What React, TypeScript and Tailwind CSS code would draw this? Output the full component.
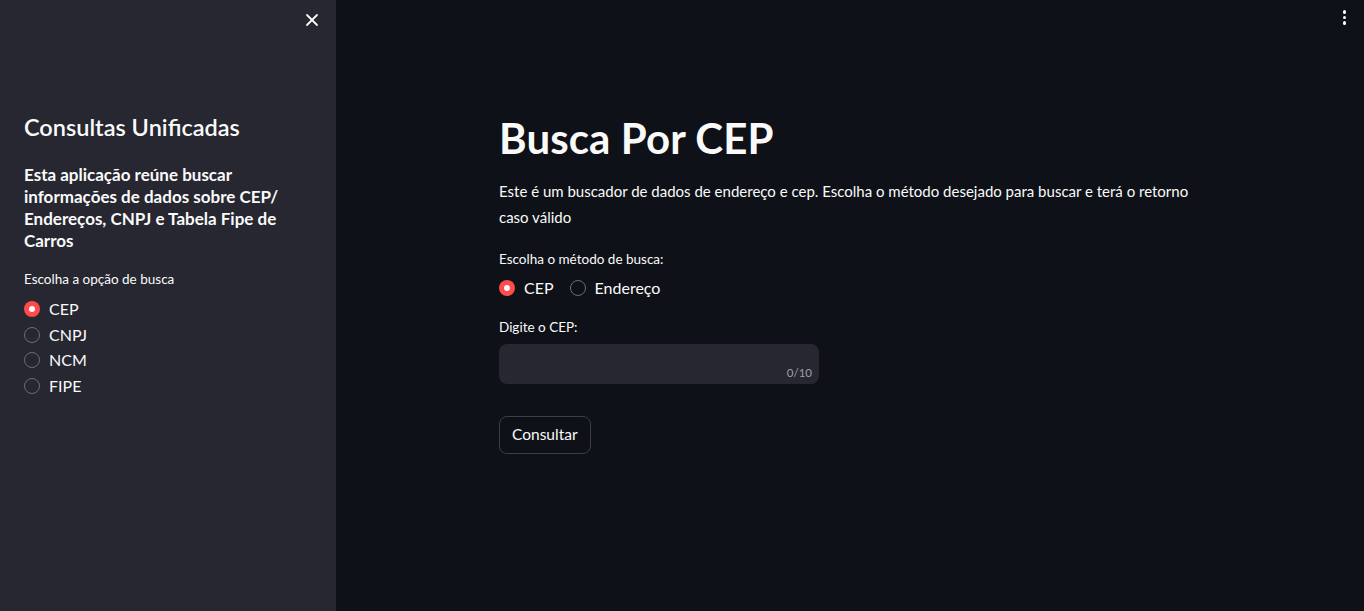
import React, { useState } from "react";

const font = { fontFamily: "'Lato', 'Noto Sans', sans-serif" };

const Radio = ({ checked, label, onClick }: any) => (
  <button onClick={onClick} className="flex items-center gap-[9px] text-left">
    {checked ? (
      <span className="w-4 h-4 rounded-full bg-[#ff4b4b] flex items-center justify-center">
        <span className="w-[6px] h-[6px] rounded-full bg-[#fafafa]" />
      </span>
    ) : (
      <span className="w-4 h-4 rounded-full border border-[#6b6d75]" />
    )}
    <span className="text-[16px] leading-[24px] text-[#fafafa]">{label}</span>
  </button>
);

const App = () => {
  const [opt, setOpt] = useState("CEP");
  const [metodo, setMetodo] = useState("CEP");
  const [cep, setCep] = useState("");

  return (
    <div style={font} className="flex w-full h-[611px] bg-[#0e1117] text-[#fafafa] overflow-hidden">
      <aside className="w-[336px] shrink-0 bg-[#262730] relative px-6 pt-[113px]">
        <button className="absolute top-[10px] right-[14px] w-5 h-5 flex items-center justify-center text-[#fafafa]">
          <svg width="14" height="14" viewBox="0 0 14 14">
            <path d="M2 2L12 12M12 2L2 12" stroke="currentColor" strokeWidth="1.8" strokeLinecap="round" />
          </svg>
        </button>
        <h2 className="text-[23.5px] font-semibold leading-[28px]">Consultas Unificadas</h2>
        <h3 className="mt-[23px] text-[17px] font-bold leading-[22px]">
          Esta aplicação reúne buscar informações de dados sobre CEP/ Endereços, CNPJ e Tabela Fipe de Carros
        </h3>
        <p className="mt-[18px] text-[13.5px] leading-[18px]">Escolha a opção de busca</p>
        <div className="mt-[9px] flex flex-col gap-[1.5px]">
          {["CEP", "CNPJ", "NCM", "FIPE"].map((o) => (
            <Radio key={o} label={o} checked={opt === o} onClick={() => setOpt(o)} />
          ))}
        </div>
      </aside>

      <main className="flex-1 relative flex justify-center">
        <button className="absolute top-[10px] right-[18px] flex flex-col gap-[2px]">
          <span className="w-[3.5px] h-[3.5px] rounded-full bg-[#fafafa]" />
          <span className="w-[3.5px] h-[3.5px] rounded-full bg-[#fafafa]" />
          <span className="w-[3.5px] h-[3.5px] rounded-full bg-[#fafafa]" />
        </button>
        <div className="w-[702px] pt-[113px]">
          <h1 className="text-[42px] font-bold leading-[50px] tracking-[0.1px]">Busca Por CEP</h1>
          <p className="mt-[15px] text-[15px] leading-[26px]">
            Este é um buscador de dados de endereço e cep. Escolha o método desejado para buscar e terá o retorno caso válido
          </p>
          <p className="mt-[20px] text-[13.5px] leading-[18px]">Escolha o método de busca:</p>
          <div className="mt-[8px] flex gap-4">
            <Radio label="CEP" checked={metodo === "CEP"} onClick={() => setMetodo("CEP")} />
            <Radio label="Endereço" checked={metodo === "Endereço"} onClick={() => setMetodo("Endereço")} />
          </div>
          <p className="mt-[18px] text-[13.5px] leading-[18px]">Digite o CEP:</p>
          <div className="mt-[8px] relative w-[320px] h-10 rounded-lg bg-[#262730]">
            <input
              value={cep}
              maxLength={10}
              onChange={(e) => setCep(e.target.value)}
              className="w-full h-full bg-transparent outline-none px-3 text-[15px] text-[#fafafa]"
            />
            <span className="absolute right-[7px] bottom-[3px] text-[11.5px] text-[#9ea0a9]">{cep.length}/10</span>
          </div>
          <button className="mt-8 h-[38px] px-3 rounded-lg border border-[#3d3f47] bg-[#0e1117] text-[15.5px] text-[#fafafa]">
            Consultar
          </button>
        </div>
      </main>
    </div>
  );
};

export default App;
